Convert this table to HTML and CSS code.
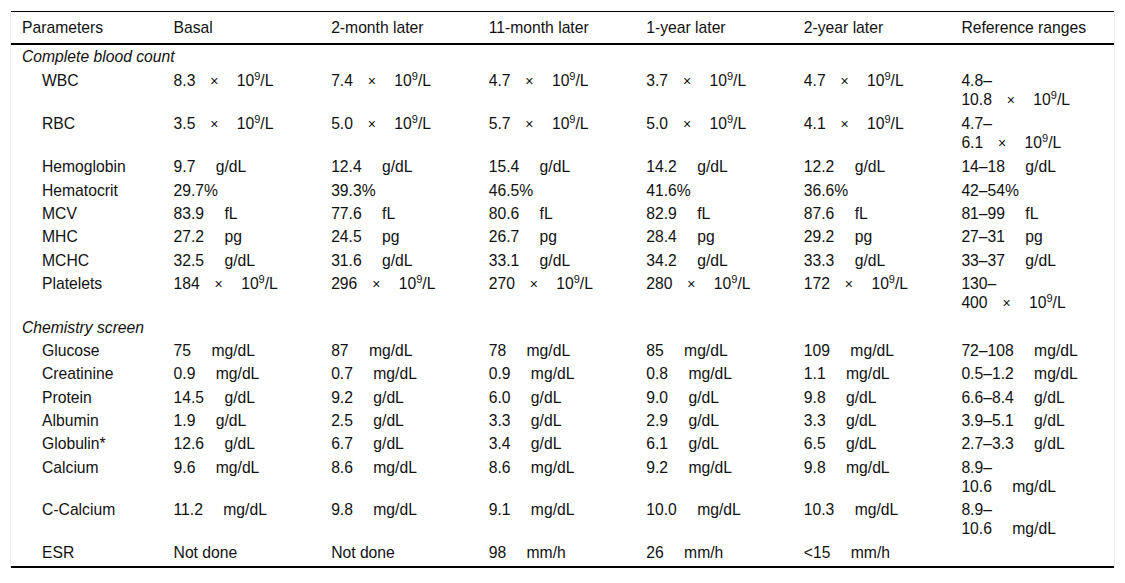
FILE: index.html
```html
<!DOCTYPE html>
<html lang="en">
<head>
<meta charset="utf-8">
<title>Laboratory parameters</title>
<link rel="stylesheet" href="styles.css">
</head>
<body>
<div class="wrap">
<table class="lab">
<colgroup><col><col><col><col><col><col><col></colgroup>
<thead>
<tr><th>Parameters</th><th>Basal</th><th>2-month later</th><th>11-month later</th><th>1-year later</th><th>2-year later</th><th>Reference ranges</th></tr>
</thead>
<tbody>
<tr class="sec"><td colspan="7">Complete blood count</td></tr>
<tr><td class="p">WBC</td><td>8.3 <span class="x">×</span> 10<sup>9</sup>/L</td><td>7.4 <span class="x">×</span> 10<sup>9</sup>/L</td><td>4.7 <span class="x">×</span> 10<sup>9</sup>/L</td><td>3.7 <span class="x">×</span> 10<sup>9</sup>/L</td><td>4.7 <span class="x">×</span> 10<sup>9</sup>/L</td><td>4.8–<br>10.8 <span class="x">×</span> 10<sup>9</sup>/L</td></tr>
<tr><td class="p">RBC</td><td>3.5 <span class="x">×</span> 10<sup>9</sup>/L</td><td>5.0 <span class="x">×</span> 10<sup>9</sup>/L</td><td>5.7 <span class="x">×</span> 10<sup>9</sup>/L</td><td>5.0 <span class="x">×</span> 10<sup>9</sup>/L</td><td>4.1 <span class="x">×</span> 10<sup>9</sup>/L</td><td>4.7–<br>6.1 <span class="x">×</span> 10<sup>9</sup>/L</td></tr>
<tr><td class="p">Hemoglobin</td><td>9.7 <span class="u">g/dL</span></td><td>12.4 <span class="u">g/dL</span></td><td>15.4 <span class="u">g/dL</span></td><td>14.2 <span class="u">g/dL</span></td><td>12.2 <span class="u">g/dL</span></td><td>14–18 <span class="u">g/dL</span></td></tr>
<tr><td class="p">Hematocrit</td><td>29.7%</td><td>39.3%</td><td>46.5%</td><td>41.6%</td><td>36.6%</td><td>42–54%</td></tr>
<tr><td class="p">MCV</td><td>83.9 <span class="u">fL</span></td><td>77.6 <span class="u">fL</span></td><td>80.6 <span class="u">fL</span></td><td>82.9 <span class="u">fL</span></td><td>87.6 <span class="u">fL</span></td><td>81–99 <span class="u">fL</span></td></tr>
<tr><td class="p">MHC</td><td>27.2 <span class="u">pg</span></td><td>24.5 <span class="u">pg</span></td><td>26.7 <span class="u">pg</span></td><td>28.4 <span class="u">pg</span></td><td>29.2 <span class="u">pg</span></td><td>27–31 <span class="u">pg</span></td></tr>
<tr><td class="p">MCHC</td><td>32.5 <span class="u">g/dL</span></td><td>31.6 <span class="u">g/dL</span></td><td>33.1 <span class="u">g/dL</span></td><td>34.2 <span class="u">g/dL</span></td><td>33.3 <span class="u">g/dL</span></td><td>33–37 <span class="u">g/dL</span></td></tr>
<tr><td class="p">Platelets</td><td>184 <span class="x">×</span> 10<sup>9</sup>/L</td><td>296 <span class="x">×</span> 10<sup>9</sup>/L</td><td>270 <span class="x">×</span> 10<sup>9</sup>/L</td><td>280 <span class="x">×</span> 10<sup>9</sup>/L</td><td>172 <span class="x">×</span> 10<sup>9</sup>/L</td><td>130–<br>400 <span class="x">×</span> 10<sup>9</sup>/L</td></tr>
<tr class="sec"><td colspan="7">Chemistry screen</td></tr>
<tr><td class="p">Glucose</td><td>75 <span class="u">mg/dL</span></td><td>87 <span class="u">mg/dL</span></td><td>78 <span class="u">mg/dL</span></td><td>85 <span class="u">mg/dL</span></td><td>109 <span class="u">mg/dL</span></td><td>72–108 <span class="u">mg/dL</span></td></tr>
<tr><td class="p">Creatinine</td><td>0.9 <span class="u">mg/dL</span></td><td>0.7 <span class="u">mg/dL</span></td><td>0.9 <span class="u">mg/dL</span></td><td>0.8 <span class="u">mg/dL</span></td><td>1.1 <span class="u">mg/dL</span></td><td>0.5–1.2 <span class="u">mg/dL</span></td></tr>
<tr><td class="p">Protein</td><td>14.5 <span class="u">g/dL</span></td><td>9.2 <span class="u">g/dL</span></td><td>6.0 <span class="u">g/dL</span></td><td>9.0 <span class="u">g/dL</span></td><td>9.8 <span class="u">g/dL</span></td><td>6.6–8.4 <span class="u">g/dL</span></td></tr>
<tr><td class="p">Albumin</td><td>1.9 <span class="u">g/dL</span></td><td>2.5 <span class="u">g/dL</span></td><td>3.3 <span class="u">g/dL</span></td><td>2.9 <span class="u">g/dL</span></td><td>3.3 <span class="u">g/dL</span></td><td>3.9–5.1 <span class="u">g/dL</span></td></tr>
<tr><td class="p">Globulin*</td><td>12.6 <span class="u">g/dL</span></td><td>6.7 <span class="u">g/dL</span></td><td>3.4 <span class="u">g/dL</span></td><td>6.1 <span class="u">g/dL</span></td><td>6.5 <span class="u">g/dL</span></td><td>2.7–3.3 <span class="u">g/dL</span></td></tr>
<tr><td class="p">Calcium</td><td>9.6 <span class="u">mg/dL</span></td><td>8.6 <span class="u">mg/dL</span></td><td>8.6 <span class="u">mg/dL</span></td><td>9.2 <span class="u">mg/dL</span></td><td>9.8 <span class="u">mg/dL</span></td><td>8.9–<br>10.6 <span class="u">mg/dL</span></td></tr>
<tr><td class="p">C-Calcium</td><td>11.2 <span class="u">mg/dL</span></td><td>9.8 <span class="u">mg/dL</span></td><td>9.1 <span class="u">mg/dL</span></td><td>10.0 <span class="u">mg/dL</span></td><td>10.3 <span class="u">mg/dL</span></td><td>8.9–<br>10.6 <span class="u">mg/dL</span></td></tr>
<tr class="last"><td class="p">ESR</td><td>Not done</td><td>Not done</td><td>98 <span class="u">mm/h</span></td><td>26 <span class="u">mm/h</span></td><td>&lt;15 <span class="u">mm/h</span></td><td></td></tr>
</tbody>
</table>
</div>
</body>
</html>
```
FILE: styles.css
```css
html, body {
  margin: 0;
  padding: 0;
  background: #fff;
}

body {
  font-family: "Liberation Sans", Arial, sans-serif;
  font-size: 15.7px;
  color: #111;
}

.wrap {
  margin: 11px 0 0 10px;
  width: 1103px;
  border-left: 1px solid #ececec;
  border-right: 1px solid #ececec;
}

.lab {
  width: 100%;
  border-collapse: collapse;
  table-layout: fixed;
  line-height: 19px;
}

.lab col {
  width: 14.2857%;
}

.lab th {
  font-weight: normal;
  text-align: left;
  padding: 6px 5px;
  border-top: 1px solid #000;
  border-bottom: 2px solid #000;
  white-space: nowrap;
}

.lab td {
  padding: 2.2px 5px;
  text-align: left;
  vertical-align: top;
  white-space: nowrap;
}

.lab th:first-child,
.lab td:first-child {
  padding-left: 11px;
}

.lab td.p {
  padding-left: 31px;
}

.sec td {
  font-style: italic;
}

.last td {
  padding-bottom: 4px;
  border-bottom: 2px solid #000;
}

.u {
  margin-left: 16px;
}

.x {
  margin: 0 14px 0 10.5px;
  font-size: 14px;
}

sup {
  font-size: 11px;
  line-height: 0;
  vertical-align: 6px;
}
```
